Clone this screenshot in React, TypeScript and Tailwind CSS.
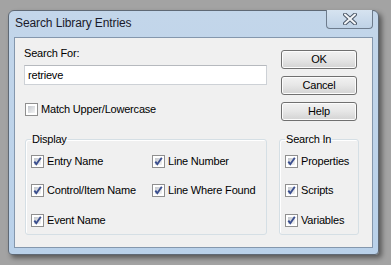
import React from 'react';

const ui = { fontFamily: '"Liberation Sans", Arial, sans-serif' };

function Check({ checked }: { checked?: boolean }) {
  return (
    <span className="relative w-[13px] h-[13px] shrink-0 border border-[#8f8f8f] bg-white p-[2px] flex">
      <span className="flex-1 bg-gradient-to-br from-[#c4c8ce] to-[#f4f4f4]" />
      {checked && (
        <svg className="absolute left-0 top-0" width="11" height="11" viewBox="0 0 11 11">
          <path d="M2.3 5.6 L4.3 8.2 L8.8 1.8" fill="none" stroke="#3b4f8f" strokeWidth="1.9" />
        </svg>
      )}
    </span>
  );
}

function CheckRow({ label, checked }: { label: string; checked?: boolean }) {
  return (
    <label className="flex items-center gap-[3px] h-[13px] text-[11px] leading-[13px] text-black whitespace-nowrap">
      <Check checked={checked} />
      <span>{label}</span>
    </label>
  );
}

function Button({ children }: { children: React.ReactNode }) {
  return (
    <button className="w-[76px] h-[19px] rounded-[3px] border border-[#707070] bg-gradient-to-b from-[#f2f2f2] via-[#e6e6e6] to-[#d3d3d3] shadow-[inset_0_0_0_1px_#fcfcfc] text-[11px] leading-[13px] text-black">
      {children}
    </button>
  );
}

export default function App() {
  return (
    <div className="w-[391px] h-[265px] bg-[#a3a3a3] pl-[8px] pt-[10px]" style={ui}>
      <div className="w-[371px] h-[245px] rounded-t-[6px] rounded-b-[4px] border border-[#5f6975] bg-gradient-to-b from-[#c3d6ea] to-[#b9d1ea] shadow-[3px_3px_5px_rgba(0,0,0,0.45)] flex flex-col px-[5px] pb-[6px]">
        {/* title bar */}
        <div className="h-[26px] flex items-start justify-between">
          <span className="pl-[1px] pt-[5px] text-[12px] leading-[15px] tracking-[-0.1px] text-[#1a1a2a]">Search Library Entries</span>
          <div className="-mt-[1px] w-[47px] h-[19px] rounded-b-[4px] border border-[#6e7c8d] border-t-0 bg-gradient-to-b from-[#d6e3f0] to-[#bfd2e6] flex items-center justify-center">
            <svg width="14" height="12" viewBox="0 0 14 12">
              <path d="M2 1.5 L12 10.5 M12 1.5 L2 10.5" stroke="#4a5666" strokeWidth="4" strokeLinecap="round" />
              <path d="M2 1.5 L12 10.5 M12 1.5 L2 10.5" stroke="#f4f6f8" strokeWidth="2" strokeLinecap="round" />
            </svg>
          </div>
        </div>

        {/* client area */}
        <div className="flex-1 border border-[#8497ad] bg-[#f0f0f0] flex flex-col tracking-[-0.2px]">
          <div className="h-[95px] flex">
            <div className="pl-[9px] pt-[9px] w-[252px] flex flex-col">
              <span className="text-[11px] leading-[13px] text-black">Search For:</span>
              <div className="mt-[5px] w-[243px] h-[20px] border border-[#cdd1d6] border-t-[#b6b9be] bg-white pl-[3px] flex items-center text-[11px] leading-[13px] text-black">
                retrieve
              </div>
              <div className="mt-[18px] pl-[1px]">
                <CheckRow label="Match Upper/Lowercase" />
              </div>
            </div>
            <div className="ml-[14px] pt-[12px] flex flex-col gap-[7px]">
              <Button>OK</Button>
              <Button>Cancel</Button>
              <Button>Help</Button>
            </div>
          </div>

          <div className="flex pl-[10px]">
            <fieldset className="w-[242px] h-[102px] border border-[#d5dfe5] rounded-[3px] shadow-[inset_1px_1px_0_#fff] pl-[5px]">
              <legend className="px-[1px] text-[11px] leading-[13px] text-black">Display</legend>
              <div className="mt-[9px] flex">
                <div className="w-[121px] flex flex-col gap-[16px]">
                  <CheckRow label="Entry Name" checked />
                  <CheckRow label="Control/Item Name" checked />
                  <div className="mt-[1px]">
                    <CheckRow label="Event Name" checked />
                  </div>
                </div>
                <div className="flex flex-col gap-[16px]">
                  <CheckRow label="Line Number" checked />
                  <CheckRow label="Line Where Found" checked />
                </div>
              </div>
            </fieldset>
            <fieldset className="ml-[12px] w-[80px] h-[102px] border border-[#d5dfe5] rounded-[3px] shadow-[inset_1px_1px_0_#fff] pl-[5px]">
              <legend className="px-[1px] text-[11px] leading-[13px] text-black">Search In</legend>
              <div className="mt-[9px] flex flex-col gap-[16px]">
                <CheckRow label="Properties" checked />
                <CheckRow label="Scripts" checked />
                <div className="mt-[1px]">
                  <CheckRow label="Variables" checked />
                </div>
              </div>
            </fieldset>
          </div>
        </div>
      </div>
    </div>
  );
}
